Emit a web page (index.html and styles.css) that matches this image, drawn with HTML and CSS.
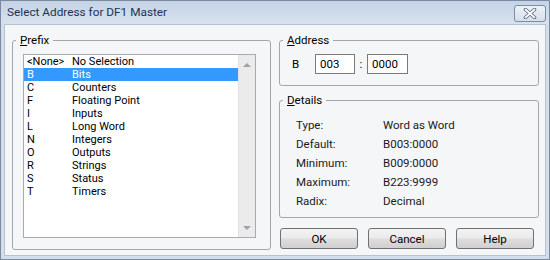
FILE: index.html
```html
<!DOCTYPE html>
<html lang="en">
<head>
  <meta charset="UTF-8" />
  <title>Select Address for DF1 Master</title>
  <link rel="stylesheet" href="styles.css">
</head>
<body>
  <div class="window">
    <div class="titlebar">
      <span class="title">Select Address for DF1 Master</span>
      <button class="close" type="button" aria-label="Close">
        <svg width="14" height="11" viewBox="0 0 14 11">
          <path d="M2.5 1.5 L11.5 9.5 M11.5 1.5 L2.5 9.5" stroke="#5d6b7f" stroke-width="3.6" stroke-linecap="round"/>
          <path d="M2.5 1.5 L11.5 9.5 M11.5 1.5 L2.5 9.5" stroke="#ffffff" stroke-width="1.8" stroke-linecap="round"/>
        </svg>
      </button>
    </div>

    <div class="client">
      <fieldset class="group prefix">
        <legend><u>P</u>refix</legend>
        <div class="listbox">
          <ul class="items">
            <li><span class="code">&lt;None&gt;</span><span>No Selection</span></li>
            <li class="selected"><span class="code">B</span><span>Bits</span></li>
            <li><span class="code">C</span><span>Counters</span></li>
            <li><span class="code">F</span><span>Floating Point</span></li>
            <li><span class="code">I</span><span>Inputs</span></li>
            <li><span class="code">L</span><span>Long Word</span></li>
            <li><span class="code">N</span><span>Integers</span></li>
            <li><span class="code">O</span><span>Outputs</span></li>
            <li><span class="code">R</span><span>Strings</span></li>
            <li><span class="code">S</span><span>Status</span></li>
            <li><span class="code">T</span><span>Timers</span></li>
          </ul>
          <div class="scrollbar">
            <span class="arrow up"></span>
            <span class="arrow down"></span>
          </div>
        </div>
      </fieldset>

      <div class="side">
        <fieldset class="group address">
          <legend><u>A</u>ddress</legend>
          <div class="address-row">
            <span class="file-type">B</span>
            <input class="field file" type="text" value="003">
            <span class="colon">:</span>
            <input class="field element" type="text" value="0000">
          </div>
        </fieldset>

        <fieldset class="group details">
          <legend><u>D</u>etails</legend>
          <dl class="info">
            <dt>Type:</dt><dd>Word as Word</dd>
            <dt>Default:</dt><dd>B003:0000</dd>
            <dt>Minimum:</dt><dd>B009:0000</dd>
            <dt>Maximum:</dt><dd>B223:9999</dd>
            <dt>Radix:</dt><dd>Decimal</dd>
          </dl>
        </fieldset>

        <div class="buttons">
          <button class="btn" type="button">OK</button>
          <button class="btn" type="button">Cancel</button>
          <button class="btn" type="button">Help</button>
        </div>
      </div>
    </div>
  </div>
</body>
</html>
```

FILE: styles.css
```css
* {
  box-sizing: border-box;
}
body {
  margin: 0;
  font-family: Roboto, "Noto Sans", sans-serif;
  font-size: 11.5px;
  color: #000;
  background: #fff;
}
.window {
  width: 550px;
  height: 260px;
  border: 1px solid #7b8a9e;
  background: #d3deec;
  display: flex;
  flex-direction: column;
}
.titlebar {
  height: 23px;
  display: flex;
  justify-content: space-between;
  align-items: flex-start;
  padding-left: 6px;
  background: linear-gradient(#c4d3e6, #d7e2ef);
}
.title {
  line-height: 23px;
  font-size: 11.8px;
  color: #1e3250;
}
.close {
  width: 32px;
  height: 17px;
  margin: 4px 3px 0 0;
  padding: 0;
  border: 1px solid #7d8ca2;
  border-radius: 3px;
  background: linear-gradient(#eef2f7, #d6dfea);
  display: flex;
  align-items: center;
  justify-content: center;
}
.client {
  flex: 1;
  margin: 0 3px 3px;
  border: 1px solid #b7c3d2;
  background: #f5f6f8;
  padding: 8px 0 0 7px;
  display: grid;
  grid-template-columns: 259px 260px;
  column-gap: 8px;
  align-items: start;
}
.group {
  margin: 0;
  padding: 0;
  min-width: 0;
  border: 1px solid #a6a6a6;
  border-radius: 3px;
}
.group legend {
  margin-left: 3px;
  padding: 0 4px;
  line-height: 14px;
}
.group u {
  text-decoration: underline;
}

/* prefix list */
.prefix {
  height: 217px;
}
.listbox {
  margin: 7px 0 0 10px;
  width: 233px;
  height: 184px;
  border: 1px solid #a7aab0;
  background: #fff;
  display: flex;
}
.items {
  flex: 1;
  margin: 0;
  padding: 0;
  list-style: none;
  font-size: 11px;
}
.items li {
  height: 13px;
  line-height: 13px;
  padding-left: 3px;
  display: flex;
  white-space: nowrap;
}
.items li.selected {
  background: #3399ff;
  color: #fff;
}
.code {
  width: 45px;
}
.scrollbar {
  width: 17px;
  background: #ebebeb;
  border-left: 1px solid #e2e2e2;
  display: flex;
  flex-direction: column;
  justify-content: space-between;
  align-items: center;
  padding: 8px 0 7px;
}
.arrow {
  width: 0;
  height: 0;
  border-left: 4px solid transparent;
  border-right: 4px solid transparent;
}
.arrow.up {
  border-bottom: 4px solid #a2a2a2;
}
.arrow.down {
  border-top: 4px solid #a2a2a2;
}

/* right side */
.side {
  display: flex;
  flex-direction: column;
}
.address-row {
  display: flex;
  align-items: center;
  padding: 7px 0 11px 12px;
}
.file-type {
  width: 23px;
}
.field {
  height: 20px;
  padding: 0 0 0 4px;
  border: 1px solid #7a7a7a;
  font-family: inherit;
  font-size: 11.5px;
  color: #000;
  background: #fff;
}
.field.file {
  width: 40px;
}
.field.element {
  width: 41px;
}
.colon {
  width: 12px;
  text-align: center;
}
.details {
  margin-top: 7px;
}
.info {
  margin: 0;
  padding: 8px 0 7px 16px;
  display: grid;
  grid-template-columns: 87px 1fr;
  grid-auto-rows: 19px;
  align-items: center;
}
.info dt,
.info dd {
  margin: 0;
  color: #1a1a1a;
}
.buttons {
  display: flex;
  gap: 10px;
  margin-top: 10px;
  padding-left: 1px;
}
.btn {
  width: 78px;
  height: 21px;
  padding: 0;
  border: 1px solid #707070;
  border-radius: 3px;
  background: linear-gradient(#f3f3f3 0%, #ebebeb 45%, #dddddd 55%, #cfcfcf 100%);
  font-family: inherit;
  font-size: 11.5px;
  color: #000;
}
```
